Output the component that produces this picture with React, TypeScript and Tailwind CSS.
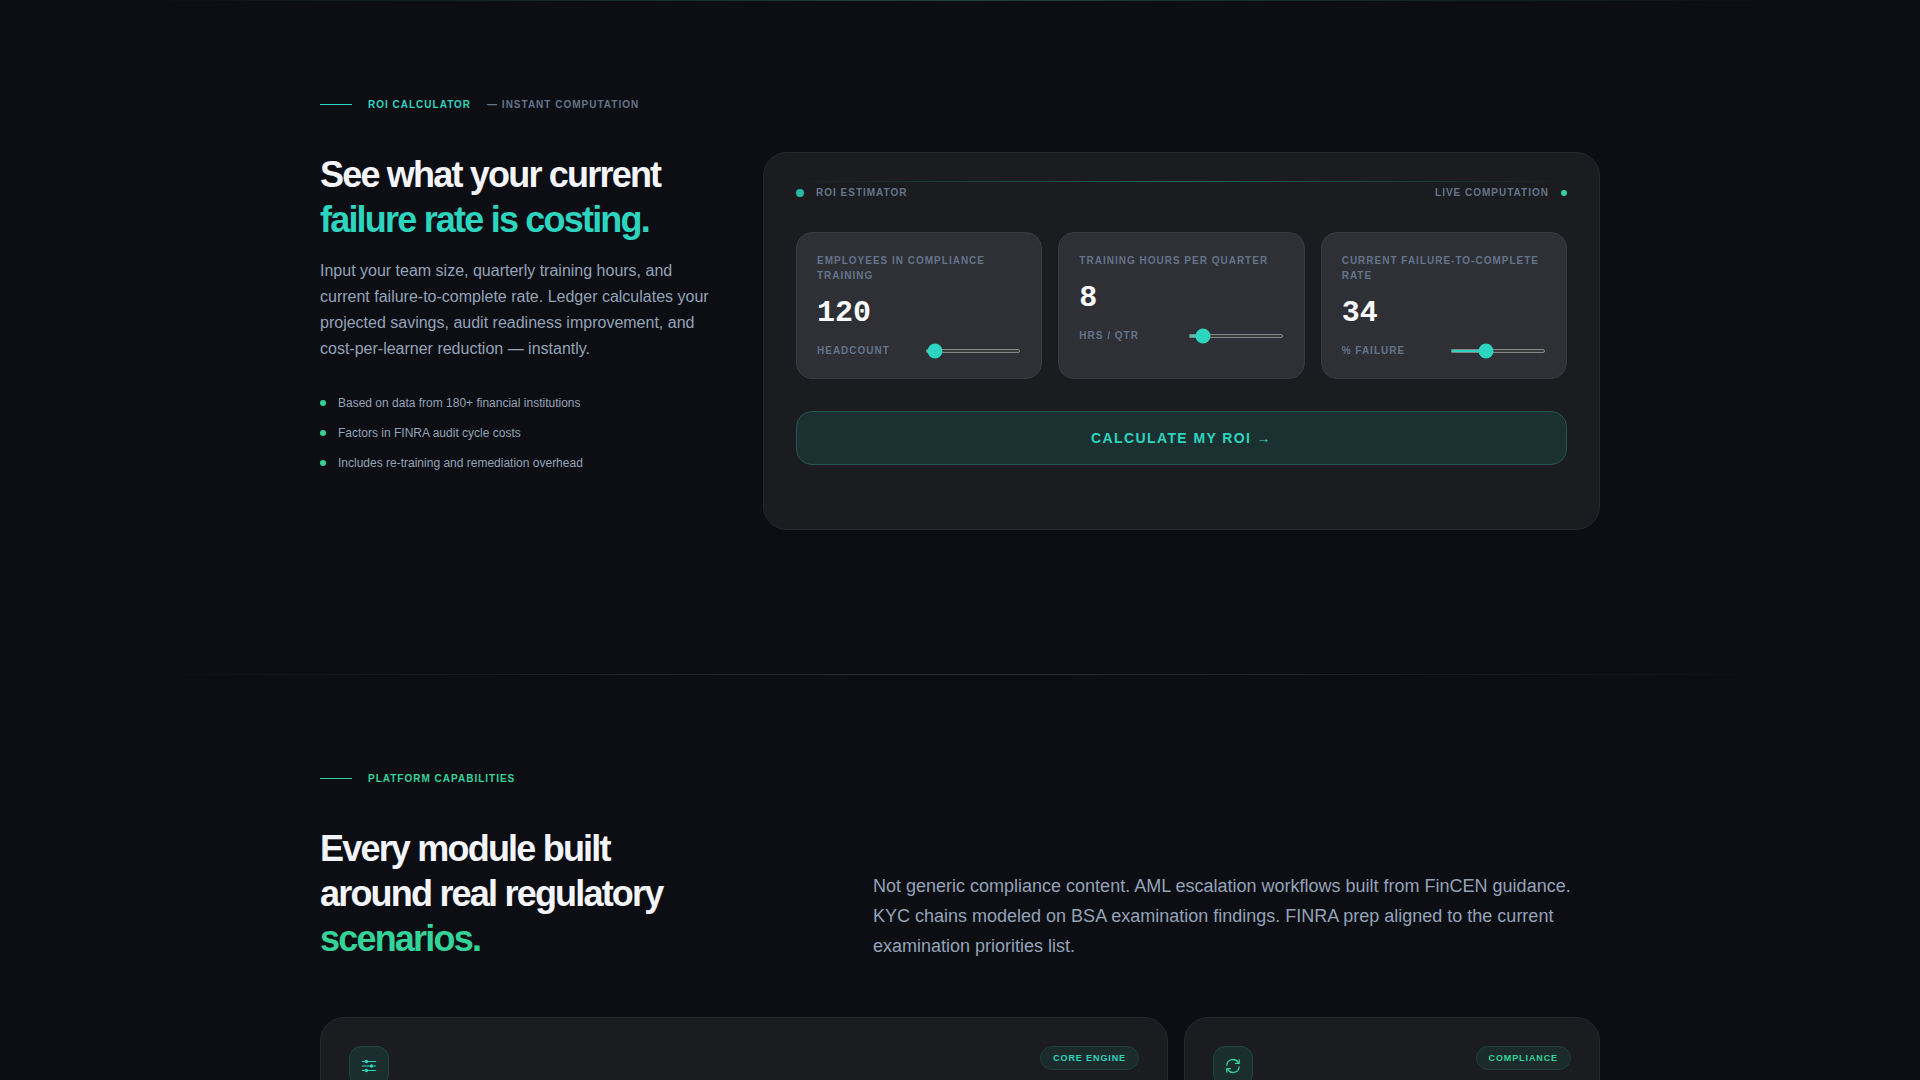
import { useState } from 'react';

const fields = [
  { id: 'employees', label: 'Employees in compliance training', unit: 'Headcount', min: 10, max: 5000, start: 120 },
  { id: 'hours', label: 'Training hours per quarter', unit: 'Hrs / Qtr', min: 1, max: 80, start: 8 },
  { id: 'failure', label: 'Current failure-to-complete rate', unit: '% Failure', min: 1, max: 95, start: 34 },
];

const points = [
  'Based on data from 180+ financial institutions',
  'Factors in FINRA audit cycle costs',
  'Includes re-training and remediation overhead',
];

const labelText = 'text-[10px] leading-[15px] font-bold uppercase tracking-[1px]';

function Divider({ tone }: { tone: string }) {
  return <div className={`h-px mx-[7%] bg-linear-to-r from-transparent to-transparent ${tone}`} />;
}

function SliderCard({ field }: { field: (typeof fields)[number] }) {
  const [value, setValue] = useState(field.start);

  return (
    <div className="rounded-2xl border border-[#3a3b3f] bg-[#2f3035] p-5">
      <label htmlFor={field.id} className={`block ${labelText} text-[#64748b]`}>
        {field.label}
      </label>
      <p className="mt-2 font-['Liberation_Mono',monospace] text-[30px] leading-[44px] font-bold text-[#f8fafc]">
        {value}
      </p>
      <div className="mt-2 flex items-center justify-between">
        <span className={`${labelText} text-[#64748b]`}>{field.unit}</span>
        <input
          id={field.id}
          type="range"
          min={field.min}
          max={field.max}
          value={value}
          onChange={(e) => setValue(Number(e.target.value))}
          className="h-1 w-24 cursor-pointer scheme-dark accent-[#2dd4bf]"
        />
      </div>
    </div>
  );
}

function SlidersIcon() {
  return (
    <svg width="16" height="16" viewBox="0 0 16 16" fill="none" stroke="#2dd4bf" strokeWidth="1.2" strokeLinecap="round">
      <path d="M1.5 3.5h13M1.5 8h13M1.5 12.5h13" />
      <g fill="#2dd4bf" stroke="none">
        <circle cx="5.5" cy="3.5" r="1.7" />
        <circle cx="10.5" cy="8" r="1.7" />
        <circle cx="5.5" cy="12.5" r="1.7" />
      </g>
    </svg>
  );
}

function RefreshIcon() {
  return (
    <svg width="16" height="16" viewBox="0 0 16 16" fill="none" stroke="#34d399" strokeWidth="1.3" strokeLinecap="round" strokeLinejoin="round">
      <path d="M1.8 7A6.2 6.2 0 0 1 13.4 4.8M14.2 9A6.2 6.2 0 0 1 2.6 11.2" />
      <path d="M14.2 1.8v3.6h-3.6M1.8 14.2v-3.6h3.6" />
    </svg>
  );
}

function ModuleCard({ icon, tag, tagColor }: { icon: React.ReactNode; tag: string; tagColor: string }) {
  return (
    <article className="h-80 rounded-3xl border border-[#27282c] bg-[#1b1c1f] p-7">
      <div className="flex items-start justify-between">
        <div className="flex size-10 items-center justify-center rounded-xl border border-[#1f4641] bg-[#1b2e2e]">
          {icon}
        </div>
        <span
          className={`rounded-full border border-[#1f3f3a] bg-[#1b2a2b] px-3 py-1 text-[9px] leading-[14px] font-bold uppercase tracking-widest ${tagColor}`}
        >
          {tag}
        </span>
      </div>
    </article>
  );
}

export default function App() {
  return (
    <main className="h-screen overflow-hidden bg-[#0d0e13] font-['Liberation_Sans',sans-serif]">
      {/* ROI calculator */}
      <section>
        <Divider tone="via-[#21413f]" />
        <div className="mx-auto max-w-[1280px] pt-24 pb-36">
          <div className={`flex items-center gap-4 ${labelText}`}>
            <span className="h-px w-8 bg-[#2dd4bf]" />
            <span className="text-[#2dd4bf]">ROI Calculator</span>
            <span className="text-[#64748b]">— Instant computation</span>
          </div>

          <div className="mt-10 grid grid-cols-[395fr_837fr] gap-12">
            <div>
              <h2 className="text-[36px] leading-[45px] font-bold tracking-tighter text-[#f4f5fa]">
                See what your current
                <br />
                <span className="text-[#2dd4bf]">failure rate is costing.</span>
              </h2>
              <p className="mt-4 text-base leading-[26px] text-[#94a3b8]">
                Input your team size, quarterly training hours, and current failure-to-complete rate. Ledger
                calculates your projected savings, audit readiness improvement, and cost-per-learner reduction —
                instantly.
              </p>
              <ul className="mt-8 space-y-3">
                {points.map((point) => (
                  <li key={point} className="flex items-center gap-3 text-xs leading-[18px] text-[#94a3b8]">
                    <span className="size-1.5 rounded-full bg-[#34d399]" />
                    {point}
                  </li>
                ))}
              </ul>
            </div>

            <div className="rounded-3xl border border-[#27282c] bg-[#1b1c1f] px-8 pt-7 pb-16">
              <div className="h-px bg-linear-to-r from-transparent via-[#25665d] to-transparent" />
              <div className={`mt-[3px] flex items-center justify-between ${labelText} text-[#64748b]`}>
                <span className="flex items-center gap-3">
                  <span className="size-2 rounded-full bg-[#25b8a4]" />
                  ROI Estimator
                </span>
                <span className="flex items-center gap-3">
                  Live computation
                  <span className="size-1.5 rounded-full bg-[#34d399]" />
                </span>
              </div>

              <div className="mt-8 grid grid-cols-3 gap-4">
                {fields.map((field) => (
                  <SliderCard key={field.id} field={field} />
                ))}
              </div>

              <button
                type="button"
                className="mt-8 w-full rounded-2xl border border-[#25554f] bg-[#1b3030] py-4 text-sm leading-5 font-bold uppercase tracking-widest text-[#2dd4bf]"
              >
                Calculate my ROI →
              </button>
            </div>
          </div>
        </div>
      </section>

      {/* Platform capabilities */}
      <section>
        <Divider tone="via-[#2c3034]" />
        <div className="mx-auto max-w-[1280px] pt-24">
          <div className={`flex items-center gap-4 ${labelText}`}>
            <span className="h-px w-8 bg-[#34d399]" />
            <span className="text-[#34d399]">Platform capabilities</span>
          </div>

          <div className="mt-10 grid grid-cols-[505fr_727fr] items-end gap-12">
            <h2 className="text-[36px] leading-[45px] font-bold tracking-tighter text-[#f4f5fa]">
              Every module built
              <br />
              around real regulatory
              <br />
              <span className="text-[#34d399]">scenarios.</span>
            </h2>
            <p className="text-lg leading-[30px] text-[#94a3b8]">
              Not generic compliance content. AML escalation workflows built from FinCEN guidance. KYC chains modeled
              on BSA examination findings. FINRA prep aligned to the current examination priorities list.
            </p>
          </div>

          <div className="mt-14 grid grid-cols-[848fr_416fr] gap-4">
            <ModuleCard icon={<SlidersIcon />} tag="Core engine" tagColor="text-[#2dd4bf]" />
            <ModuleCard icon={<RefreshIcon />} tag="Compliance" tagColor="text-[#34d399]" />
          </div>
        </div>
      </section>
    </main>
  );
}
